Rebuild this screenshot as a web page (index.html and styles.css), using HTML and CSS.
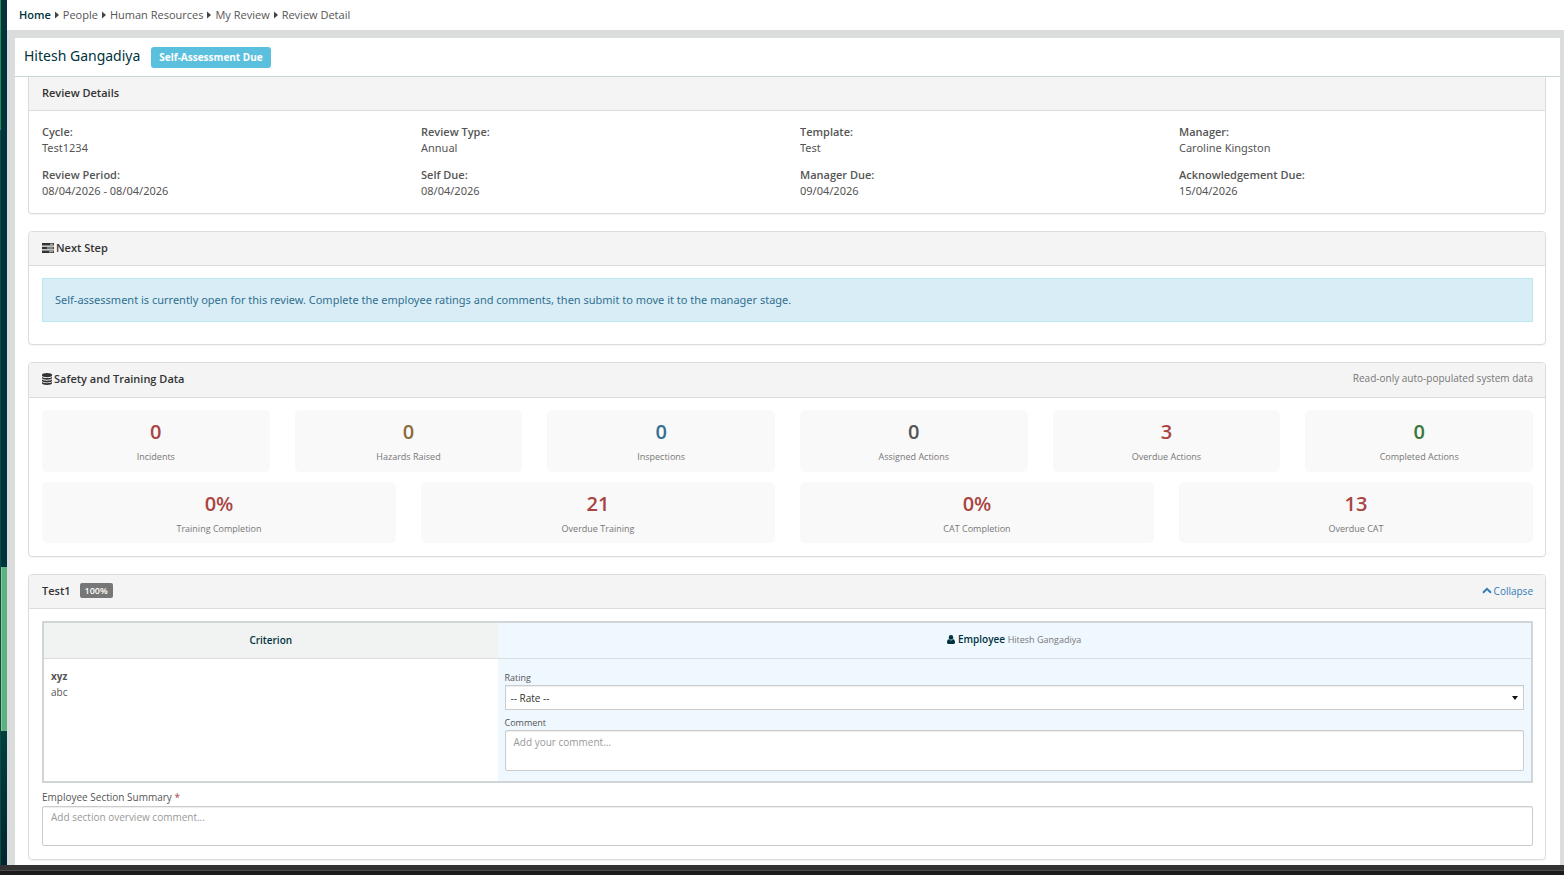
FILE: index.html
```html
<!DOCTYPE html>
<html lang="en">
<head>
  <meta charset="UTF-8">
  <meta name="viewport" content="width=device-width, initial-scale=1.0">
  <title>Review Detail</title>
  <link rel="stylesheet" href="styles.css">
</head>
<body>
  <div class="app">
    <div class="side-strip">
      <div class="side-top"></div>
      <div class="side-thumb"></div>
      <div class="side-bottom"></div>
    </div>

    <div class="page">
      <nav class="breadcrumb" aria-label="Breadcrumb">
        <a class="home" href="#">Home</a>
        <svg class="caret" viewBox="0 0 4 8"><path d="M0 0.5L4 4L0 7.5z"/></svg>
        <a href="#">People</a>
        <svg class="caret" viewBox="0 0 4 8"><path d="M0 0.5L4 4L0 7.5z"/></svg>
        <a href="#">Human Resources</a>
        <svg class="caret" viewBox="0 0 4 8"><path d="M0 0.5L4 4L0 7.5z"/></svg>
        <a href="#">My Review</a>
        <svg class="caret" viewBox="0 0 4 8"><path d="M0 0.5L4 4L0 7.5z"/></svg>
        <a href="#">Review Detail</a>
      </nav>

      <main class="main">
        <header class="title-bar">
          <h1>Hitesh Gangadiya</h1>
          <span class="label-info">Self-Assessment Due</span>
        </header>

        <div class="content">
          <section class="panel panel-first">
            <div class="panel-heading"><h2>Review Details</h2></div>
            <div class="panel-body">
              <dl class="details">
                <div><dt>Cycle:</dt><dd>Test1234</dd></div>
                <div><dt>Review Type:</dt><dd>Annual</dd></div>
                <div><dt>Template:</dt><dd>Test</dd></div>
                <div><dt>Manager:</dt><dd>Caroline Kingston</dd></div>
                <div><dt>Review Period:</dt><dd>08/04/2026 - 08/04/2026</dd></div>
                <div><dt>Self Due:</dt><dd>08/04/2026</dd></div>
                <div><dt>Manager Due:</dt><dd>09/04/2026</dd></div>
                <div><dt>Acknowledgement Due:</dt><dd>15/04/2026</dd></div>
              </dl>
            </div>
          </section>

          <section class="panel">
            <div class="panel-heading">
              <h2>
                <svg class="icon icon-tasks" viewBox="0 0 12 10"><path d="M0 0h12v2.6H0zM0 3.7h12v2.6H0zM0 7.4h12V10H0z"/><path class="cut" d="M8 .8h3.2v1H8zM5 4.500h6.200v1H5zM7 8.200h4.200v1H7z"/></svg>
                Next Step
              </h2>
            </div>
            <div class="panel-body">
              <div class="alert">Self-assessment is currently open for this review. Complete the employee ratings and comments, then submit to move it to the manager stage.</div>
            </div>
          </section>

          <section class="panel">
            <div class="panel-heading heading-data">
              <h2>
                <svg class="icon icon-database" viewBox="0 0 10 12"><path d="M0 1.8C0 .8 2.200 0 5 0s5 .8 5 1.800v.7C10 3.400 7.800 4.200 5 4.200S0 3.400 0 2.500zM0 3.900C1 4.700 3 5.100 5 5.100s4-.4 5-1.200v1.200C10 6 7.800 6.800 5 6.800S0 6 0 5.100zM0 6.500C1 7.300 3 7.700 5 7.700s4-.4 5-1.200v1.200c0 .9-2.200 1.700-5 1.700S0 8.600 0 7.700zM0 9.100c1 .8 3 1.200 5 1.200s4-.4 5-1.200v1.200c0 .9-2.200 1.700-5 1.700s-5-.8-5-1.700z"/></svg>
                Safety and Training Data
              </h2>
              <span class="note">Read-only auto-populated system data</span>
            </div>
            <div class="panel-body">
              <div class="tiles tiles-six">
                <div class="tile"><strong class="danger">0</strong><span>Incidents</span></div>
                <div class="tile"><strong class="warning">0</strong><span>Hazards Raised</span></div>
                <div class="tile"><strong class="info">0</strong><span>Inspections</span></div>
                <div class="tile"><strong>0</strong><span>Assigned Actions</span></div>
                <div class="tile"><strong class="danger">3</strong><span>Overdue Actions</span></div>
                <div class="tile"><strong class="success">0</strong><span>Completed Actions</span></div>
              </div>
              <div class="tiles tiles-four">
                <div class="tile"><strong class="danger">0%</strong><span>Training Completion</span></div>
                <div class="tile"><strong class="danger">21</strong><span>Overdue Training</span></div>
                <div class="tile"><strong class="danger">0%</strong><span>CAT Completion</span></div>
                <div class="tile"><strong class="danger">13</strong><span>Overdue CAT</span></div>
              </div>
            </div>
          </section>

          <section class="panel">
            <div class="panel-heading">
              <h2>Test1 <span class="label-weight">100%</span></h2>
              <button class="collapse" type="button">
                <svg viewBox="0 0 10 7"><path d="M1 5.800L5 1.800L9 5.800"/></svg>
                Collapse
              </button>
            </div>
            <div class="panel-body">
              <table class="criteria">
                <thead>
                  <tr>
                    <th class="col-criterion" scope="col">Criterion</th>
                    <th class="col-employee" scope="col">
                      <svg class="icon-user" viewBox="0 0 8 9"><path d="M4 0a2.300 2.400 0 0 1 0 4.800A2.300 2.400 0 0 1 4 0zM2 4.300C2.500 5 3.200 5.400 4 5.400S5.500 5 6 4.300C7.400 4.500 8 5.800 8 7.600 8 8.500 7.500 9 6.700 9H1.300C.5 9 0 8.500 0 7.600 0 5.800.6 4.500 2 4.300z"/></svg>
                      Employee <span class="employee-name">Hitesh Gangadiya</span>
                    </th>
                  </tr>
                </thead>
                <tbody>
                  <tr>
                    <td><strong>xyz</strong><p>abc</p></td>
                    <td class="col-employee">
                      <label for="rating">Rating</label>
                      <select id="rating">
                        <option>-- Rate --</option>
                      </select>
                      <label for="comment">Comment</label>
                      <textarea id="comment" placeholder="Add your comment..."></textarea>
                    </td>
                  </tr>
                </tbody>
              </table>
              <label class="summary-label" for="summary">Employee Section Summary <span class="required">*</span></label>
              <textarea class="summary" id="summary" placeholder="Add section overview comment..."></textarea>
            </div>
          </section>
        </div>
      </main>
    </div>
  </div>
  <footer class="bottom-bar"></footer>
</body>
</html>
```
FILE: styles.css
```css
* {
  box-sizing: border-box;
}
body {
  display: flex;
  flex-direction: column;
  height: 100vh;
  margin: 0;
  overflow: hidden;
  font-family: "Open Sans", "Noto Sans", sans-serif;
  font-size: 11px;
  line-height: 16px;
  color: #555;
  background: #fff;
}
h1, h2, p, dl, dd {
  margin: 0;
}
.app {
  display: flex;
  flex: 1;
  min-height: 0;
}

/* left strip */
.side-strip {
  display: flex;
  flex-direction: column;
  width: 7px;
  padding-left: 1px;
  background: linear-gradient(#23904c 0 130px, #0b4a47 130px);
}
.side-top {
  flex: 567;
  background: #00333d;
}
.side-thumb {
  flex: 164;
  background: #5fb07f;
  border-left: 1px solid #8cc9a0;
}
.side-bottom {
  flex: 134;
  background: linear-gradient(#00403f, #002530);
}

.page {
  display: flex;
  flex: 1;
  flex-direction: column;
  min-width: 0;
}
.breadcrumb {
  display: flex;
  align-items: center;
  gap: 4px;
  height: 30px;
  padding: 0 12px;
}
.breadcrumb a {
  color: #555;
  text-decoration: none;
}
.breadcrumb .home {
  color: #00333d;
  font-weight: 600;
}
.caret {
  width: 4px;
  height: 8px;
  fill: #444;
}
.main {
  display: flex;
  flex: 1;
  flex-direction: column;
  min-height: 0;
  border: solid #dadddc;
  border-width: 8px 4px 0 8px;
}
.title-bar {
  display: flex;
  align-items: center;
  gap: 11px;
  height: 39px;
  padding: 0 9px;
  border-bottom: 1px solid #c9d6d6;
}
.title-bar h1 {
  padding-bottom: 3px;
  font-family: "Noto Sans", sans-serif;
  font-size: 14px;
  font-weight: 400;
  line-height: 20px;
  color: #00333d;
}
.label-info {
  padding: 2px 8px;
  border-radius: 3px;
  background: #5bc0de;
  color: #fff;
  font-size: 10px;
  font-weight: 700;
  line-height: 17px;
}
.content {
  flex: 1;
  min-height: 0;
  padding: 0 14px 0 13px;
  overflow: hidden;
}

/* panels */
.panel {
  margin-bottom: 17px;
  border: 1px solid #dadddc;
  border-radius: 4px;
  box-shadow: 0 1px 1px rgba(0, 0, 0, 0.05);
}
.panel-first {
  border-top: 0;
  border-radius: 0 0 4px 4px;
}
.panel-heading {
  display: flex;
  align-items: center;
  justify-content: space-between;
  height: 34px;
  padding: 0 12px 2px 13px;
  border-bottom: 1px solid #dadddc;
  border-radius: 3px 3px 0 0;
  background: #f4f4f4;
}
.heading-data {
  height: 35px;
}
.panel-heading h2 {
  display: flex;
  align-items: center;
  gap: 2px;
  font-size: 11px;
  font-weight: 600;
  color: #333;
}
.panel-body {
  padding: 12px 12px 13px 13px;
}
.icon {
  fill: #333;
}
.icon .cut {
  fill: #ccc;
}
.icon-tasks {
  width: 12px;
  height: 10px;
}
.icon-database {
  width: 10px;
  height: 12px;
}
.note {
  padding-bottom: 2px;
  font-size: 10px;
  color: #777;
}
.details {
  display: grid;
  grid-template-columns: repeat(4, 1fr);
  gap: 11px 25px;
  padding: 1px 0;
}
.details dt {
  font-weight: 600;
}
.details dd, .alert {
  font-family: "Noto Sans", sans-serif;
}
.alert {
  margin-bottom: 9px;
  padding: 13px 12px;
  border: 1px solid #bce8f1;
  background: #d9edf7;
  color: #31708f;
}

/* stat tiles */
.tiles {
  display: grid;
  gap: 25px;
}
.tiles-six {
  grid-template-columns: repeat(6, 1fr);
  margin-bottom: 10px;
}
.tiles-six .tile {
  padding-bottom: 9px;
}
.tiles-four {
  grid-template-columns: repeat(4, 1fr);
}
.tile {
  display: flex;
  flex-direction: column;
  align-items: center;
  padding: 8px 8px 7px;
  border-radius: 5px;
  background: #f9f9f9;
}
.tile strong {
  font-size: 20px;
  font-weight: 600;
  line-height: 27px;
}
.tile span {
  padding-top: 4px;
  font-size: 9px;
  line-height: 15px;
  color: #777;
}
.tiles-six .tile {
  padding-bottom: 8px;
}
.tile .danger {
  color: #a94442;
}
.tile .warning {
  color: #8a6d3b;
}
.tile .info {
  color: #31708f;
}
.tile .success {
  color: #3c763d;
}

/* criteria table */
.label-weight {
  margin-left: 7px;
  padding: 0 5px;
  border-radius: 2px;
  background: #777;
  color: #fff;
  font-size: 9px;
  line-height: 15px;
}
.collapse {
  display: flex;
  align-items: center;
  gap: 2px;
  padding: 0;
  border: 0;
  background: none;
  color: #337ab7;
  font-family: inherit;
  font-size: 10px;
  line-height: 16px;
}
.collapse svg {
  width: 10px;
  height: 7px;
  fill: none;
  stroke: #337ab7;
  stroke-width: 2;
}
.criteria {
  width: 100%;
  border: 2px solid #d0d6d8;
  border-collapse: separate;
  border-spacing: 0;
  table-layout: fixed;
  font-size: 10px;
}
.criteria th {
  height: 36px;
  padding: 0 7px 2px;
  border-bottom: 1px solid #dadddc;
  font-weight: 600;
  color: #00333d;
}
.criteria td {
  padding: 9px 7px;
  vertical-align: top;
}
.criteria td.col-employee {
  padding: 11px 7px 10px;
}
.criteria .col-criterion {
  width: 30.5%;
  background: #f1f3f2;
}
.criteria .col-employee {
  background: #eff7ff;
}
.icon-user {
  width: 8px;
  height: 9px;
  fill: #00333d;
  vertical-align: -1px;
}
.employee-name {
  font-size: 9px;
  font-weight: 400;
  color: #777;
}
label {
  display: block;
  font-size: 9px;
  line-height: 15px;
}
select, textarea {
  display: block;
  width: 100%;
  border: 1px solid #ccc;
  background: #fff;
  box-shadow: inset 0 1px 1px rgba(0, 0, 0, 0.075);
  font-family: inherit;
  font-size: 10px;
}
select {
  appearance: none;
  height: 25px;
  margin-bottom: 5px;
  padding: 0 5px;
  border-radius: 0;
  color: #333;
  background: #fff url("data:image/svg+xml,%3Csvg xmlns='http://www.w3.org/2000/svg' viewBox='0 0 6 4'%3E%3Cpath d='M0 0h6L3 4z' fill='%23111'/%3E%3C/svg%3E") no-repeat right 5px center / 6px 4px;
}
textarea {
  height: 41px;
  padding: 4px 8px;
  border-radius: 2px;
  line-height: 15px;
  resize: none;
}
textarea::placeholder {
  color: #999;
}
.summary-label {
  margin: 6px 0 1px;
  font-size: 10px;
  line-height: 16px;
}
.summary {
  height: 40px;
  padding-top: 3px;
}
.required {
  color: #a94442;
}

.bottom-bar {
  height: 10px;
  background: linear-gradient(#333 0 5px, #4a4a4a 5px 6px, #1c1a1b 6px);
}
```
